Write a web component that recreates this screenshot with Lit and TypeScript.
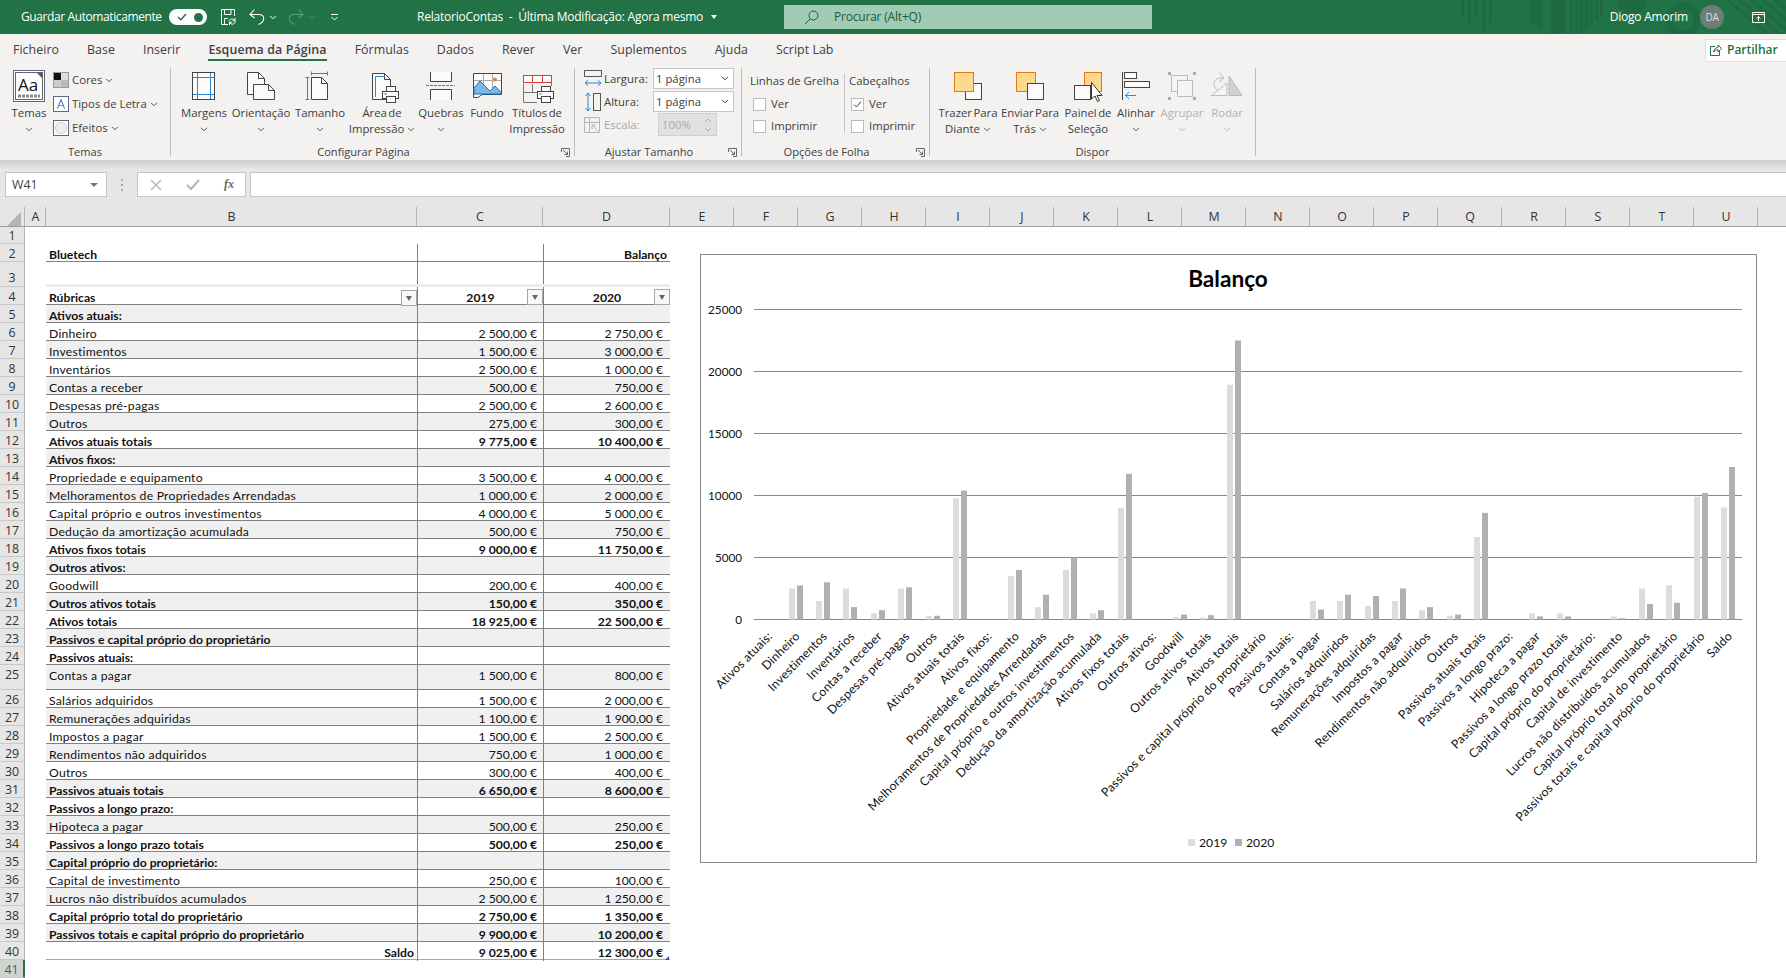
import { LitElement, css, html, svg } from "lit";
import { customElement } from "lit/decorators.js";

type Kind = "head" | "item" | "total";
interface Line {
  label: string;
  a?: number;
  b?: number;
  kind: Kind;
}

const LINES: Line[] = [
  { label: "Ativos atuais:", kind: "head" },
  { label: "Dinheiro", a: 2500, b: 2750, kind: "item" },
  { label: "Investimentos", a: 1500, b: 3000, kind: "item" },
  { label: "Inventários", a: 2500, b: 1000, kind: "item" },
  { label: "Contas a receber", a: 500, b: 750, kind: "item" },
  { label: "Despesas pré-pagas", a: 2500, b: 2600, kind: "item" },
  { label: "Outros", a: 275, b: 300, kind: "item" },
  { label: "Ativos atuais totais", a: 9775, b: 10400, kind: "total" },
  { label: "Ativos fixos:", kind: "head" },
  { label: "Propriedade e equipamento", a: 3500, b: 4000, kind: "item" },
  { label: "Melhoramentos de Propriedades Arrendadas", a: 1000, b: 2000, kind: "item" },
  { label: "Capital próprio e outros investimentos", a: 4000, b: 5000, kind: "item" },
  { label: "Dedução da amortização acumulada", a: 500, b: 750, kind: "item" },
  { label: "Ativos fixos totais", a: 9000, b: 11750, kind: "total" },
  { label: "Outros ativos:", kind: "head" },
  { label: "Goodwill", a: 200, b: 400, kind: "item" },
  { label: "Outros ativos totais", a: 150, b: 350, kind: "total" },
  { label: "Ativos totais", a: 18925, b: 22500, kind: "total" },
  { label: "Passivos e capital próprio do proprietário", kind: "head" },
  { label: "Passivos atuais:", kind: "head" },
  { label: "Contas a pagar", a: 1500, b: 800, kind: "item" },
  { label: "Salários adquiridos", a: 1500, b: 2000, kind: "item" },
  { label: "Remunerações adquiridas", a: 1100, b: 1900, kind: "item" },
  { label: "Impostos a pagar", a: 1500, b: 2500, kind: "item" },
  { label: "Rendimentos não adquiridos", a: 750, b: 1000, kind: "item" },
  { label: "Outros", a: 300, b: 400, kind: "item" },
  { label: "Passivos atuais totais", a: 6650, b: 8600, kind: "total" },
  { label: "Passivos a longo prazo:", kind: "head" },
  { label: "Hipoteca a pagar", a: 500, b: 250, kind: "item" },
  { label: "Passivos a longo prazo totais", a: 500, b: 250, kind: "total" },
  { label: "Capital próprio do proprietário:", kind: "head" },
  { label: "Capital de investimento", a: 250, b: 100, kind: "item" },
  { label: "Lucros não distribuídos acumulados", a: 2500, b: 1250, kind: "item" },
  { label: "Capital próprio total do proprietário", a: 2750, b: 1350, kind: "total" },
  { label: "Passivos totais e capital próprio do proprietário", a: 9900, b: 10200, kind: "total" },
  { label: "Saldo", a: 9025, b: 12300, kind: "total" },
];

const TABS = ["Ficheiro", "Base", "Inserir", "Esquema da Página", "Fórmulas", "Dados", "Rever", "Ver", "Suplementos", "Ajuda", "Script Lab"];
const COLS = "EFGHIJKLMNOPQRSTU".split("");

const rowHeight = (n: number) => (n === 1 ? 17 : n === 3 || n === 25 ? 25 : 18);

const money = (v: number) => {
  const [int, dec] = v.toFixed(2).split(".");
  return `${int.replace(/\B(?=(\d{3})+$)/g, "\u00a0")},${dec}\u00a0€`;
};

const chev = (c = "#555") => html`<svg class="chev" width="8" height="5" viewBox="0 0 8 5"><path d="M1 .8 4 3.8 7 .8" fill="none" stroke=${c} stroke-width="1"/></svg>`;

// icons are drawn in page coordinates, the viewBox is centred on the button
const ico = (cx: number, body: unknown) => html`<svg class="ic" width="44" height="34" viewBox="${cx - 22} 70 44 34">${body}</svg>`;

const INK = "#444";
const PAPER = "#fbfbfb";
const BLUE = "#2b88d8";

const sheetPage = (x: number, y: number, w: number, h: number, f = 6) => svg`
  <path d="M${x} ${y}H${x + w - f}L${x + w} ${y + f}V${y + h}H${x}Z" fill=${PAPER} stroke=${INK}/>
  <path d="M${x + w - f} ${y}V${y + f}H${x + w}" fill="none" stroke=${INK}/>`;

const printer = (x: number, y: number) => svg`
  <rect x=${x + 4} y=${y} width="9" height="5" fill=${PAPER} stroke=${INK}/>
  <rect x=${x} y=${y + 5} width="16" height="7" fill=${PAPER} stroke=${INK}/>
  <rect x=${x + 4} y=${y + 10} width="9" height="6" fill=${PAPER} stroke=${INK}/>
  <rect x=${x + 2} y=${y + 7} width="2" height="1" fill=${INK}/>`;

const ICONS = {
  margens: svg`<rect x="192.5" y="72.5" width="22" height="27" fill=${PAPER} stroke=${INK}/><path d="M197.5 73V99M210.5 73V99M193 77.5H214M193 94.5H214" stroke=${BLUE}/>`,
  orient: svg`${sheetPage(247.5, 72.5, 17, 22)}${sheetPage(253.5, 84.5, 21, 15)}`,
  tamanho: svg`${sheetPage(311.5, 77.5, 16, 22)}<path d="M311 73.5H328M311.5 71.5V75.5M327.5 71.5V75.5M307.5 77V100M305.5 77.5H309.5M305.5 99.5H309.5" stroke=${BLUE} fill="none"/>`,
  area: svg`${sheetPage(372.5, 73.5, 18, 26)}<path d="M375.5 97V76.5H385" fill="none" stroke=${BLUE}/>${printer(382.5, 86.5)}`,
  quebras: svg`<path d="M430.5 72V81.5H451.5V72M430.5 100V89.5H451.5V100" fill=${PAPER} stroke=${INK}/><path d="M426 85.5H455" stroke=${BLUE} stroke-dasharray="3 1"/>`,
  fundo: svg`<path d="M473.5 73.5H501.5V94.5H482L478 97.5H473.5Z" fill=${PAPER} stroke=${INK}/><path d="M474 80.5H501M483.5 74V94M492.5 74V94" stroke="#aaa"/><path d="M474 94V88L480 81 490 91 495 86 501 92.5V94Z" fill="#7db9e8" stroke="#1f6fb2"/><circle cx="495" cy="79.5" r="2" fill="#e8862e"/>`,
  titulos: svg`<path d="M523.5 83.5V102.5H537M523.5 92.5H537M532.5 84V92" fill="none" stroke="#777"/><rect x="523.5" y="75.5" width="28" height="7" fill=${PAPER} stroke="#e03a3a"/><path d="M532.5 76V82M542.5 76V82" stroke="#e03a3a"/><path d="M551.5 83V86" stroke="#777"/>${printer(537.5, 86.5)}`,
  trazer: svg`<rect x="966.5" y="83.5" width="16" height="16" fill=${PAPER} stroke=${INK}/><rect x="955.5" y="72.5" width="19" height="19" fill="#fbd98d" stroke="#e07b14"/>`,
  enviar: svg`<rect x="1017.5" y="72.5" width="19" height="19" fill="#fbd98d" stroke="#e07b14"/><rect x="1028.5" y="83.5" width="16" height="16" fill=${PAPER} stroke=${INK}/>`,
  painel: svg`<rect x="1085.5" y="72.5" width="17" height="19" fill="#fbd98d" stroke="#e07b14"/><rect x="1075.5" y="85.5" width="16" height="14" fill=${PAPER} stroke=${INK}/><path d="M1092.5 82.5V99L1096 96 1098.5 101.5 1100.5 100.5 1098 95.5H1103Z" fill="#fff" stroke="#333"/>`,
  alinhar: svg`<path d="M1123.5 72V100" stroke=${INK}/><rect x="1125.5" y="72.5" width="12" height="6" fill=${PAPER} stroke=${INK}/><rect x="1125.5" y="81.5" width="25" height="6" fill=${PAPER} stroke=${INK}/><path d="M1137 95.5H1126M1130 92 1126.5 95.5 1130 99" fill="none" stroke=${BLUE}/>`,
  agrupar: svg`<g fill="#f4f4f4" stroke="#bbb"><rect x="1172.5" y="75.5" width="16" height="16"/><rect x="1178.5" y="80.5" width="15" height="16"/></g><g fill="#aaa"><rect x="1169" y="72" width="3" height="3"/><rect x="1194" y="72" width="3" height="3"/><rect x="1169" y="97" width="3" height="3"/><rect x="1194" y="97" width="3" height="3"/></g>`,
  rodar: svg`<path d="M1212.5 95.5H1228V83Z" fill="#f4f4f4" stroke="#bbb"/><path d="M1230 95.5H1243L1230 76Z" fill="#d0d0d0" stroke="#bbb"/><path d="M1218 90C1212 85 1215 77 1224 78M1220 72.5 1225 78 1220 82" fill="none" stroke="#bbb"/>`,
};

const titleIcons = {
  save: html`<svg width="18" height="18" viewBox="0 0 18 18" fill="none" stroke="#fff"><path d="M9 16.5H2.5V1.5H15.5V8M5.5 2V6.5H12V2M5.5 16V10.5H9"/><path d="M10 13.5C10.5 10.5 14.5 10 16 12.5M16 10V12.8H13.4M16.5 13.5C16 16.5 12 17 10.5 14.5M10.5 17V14.2H13"/></svg>`,
  undo: html`<svg width="16" height="18" viewBox="0 0 16 18" fill="none" stroke="#fff" stroke-width="1.1"><path d="M1 6.5H10.5C16.5 7 16 14 9.5 16.5M5.5 1.5 1 6.5 5.5 10"/></svg>`,
  redo: html`<svg width="16" height="18" viewBox="0 0 16 18" fill="none" stroke="#5d9c7c" stroke-width="1.1"><path d="M15 6.5H5.5C-.5 7 0 14 6.5 16.5M10.5 1.5 15 6.5 10.5 10"/></svg>`,
  custom: html`<svg width="9" height="9" viewBox="0 0 9 9" fill="none" stroke="#fff"><path d="M1 1.5H8M1.5 4 4.5 7 7.5 4"/></svg>`,
};

@customElement("app-root")
export class AppRoot extends LitElement {
  static styles = css`
    :host {
      display: block;
      width: 1786px;
      height: 978px;
      overflow: hidden;
      background: #fff;
      color: #404040;
      font: 12px/16px "Open Sans", sans-serif;
    }
    svg {
      display: block;
      flex: none;
    }

    .titlebar {
      position: relative;
      display: flex;
      align-items: center;
      height: 34px;
      background: #217346;
      color: #fff;
      overflow: hidden;
    }
    .deco {
      position: absolute;
      left: 1450px;
      top: 0;
    }
    .qa {
      display: flex;
      align-items: center;
      width: 417px;
      flex: none;
    }
    .autosave {
      width: 169px;
      padding-left: 21px;
      box-sizing: border-box;
      white-space: nowrap;
      letter-spacing: -0.4px;
    }
    .toggle {
      display: flex;
      align-items: center;
      justify-content: space-between;
      width: 38px;
      height: 16px;
      padding: 0 4px 0 8px;
      box-sizing: border-box;
      border-radius: 8px;
      background: #fff;
      margin-right: 12px;
    }
    .toggle i {
      width: 9px;
      height: 9px;
      border-radius: 50%;
      background: #217346;
    }
    .qa .spacer {
      width: 12px;
    }
    .qa .gap4 {
      margin: 0 4px;
    }
    .qa .redo {
      margin-left: 7px;
    }
    .qa .custom {
      margin-left: 10px;
    }
    .doc {
      width: 367px;
      flex: none;
      white-space: pre;
      display: flex;
      align-items: center;
      letter-spacing: -0.22px;
    }
    .doc b {
      width: 0;
      height: 0;
      margin-left: 8px;
      border: 3.5px solid transparent;
      border-top: 4px solid #fff;
      border-bottom: 0;
    }
    .search {
      display: flex;
      align-items: center;
      width: 368px;
      height: 24px;
      flex: none;
      background: #a0ccb4;
      color: #1c5a38;
      padding-left: 20px;
      box-sizing: border-box;
      gap: 15px;
      letter-spacing: -0.2px;
    }
    .user {
      position: relative;
      margin-left: auto;
      display: flex;
      align-items: center;
      letter-spacing: -0.2px;
    }
    .avatar {
      width: 24px;
      height: 24px;
      border-radius: 50%;
      margin: 0 28px 0 12px;
      background: #6f7d78;
      color: #d9dedc;
      font-size: 10px;
      text-align: center;
      line-height: 24px;
    }
    .user svg {
      margin-right: 21px;
    }

    .tabs {
      display: flex;
      align-items: center;
      height: 32px;
      background: #f3f2f1;
      padding-top: 0;
    }
    .tab {
      position: relative;
      padding: 0 14px;
      line-height: 32px;
      font-size: 12.4px;
      white-space: nowrap;
      letter-spacing: 0.04px;
    }
    .tab:first-child {
      margin-left: -1px;
    }
    .tab.on {
      font-weight: 600;
      letter-spacing: 0.12px;
    }
    .tab.on::after {
      content: "";
      position: absolute;
      left: 14px;
      right: 14px;
      bottom: 5px;
      height: 2px;
      background: #217346;
    }
    .share {
      display: flex;
      align-items: center;
      gap: 5px;
      margin-left: auto;
      width: 81px;
      height: 23px;
      box-sizing: border-box;
      padding-left: 4px;
      background: #fff;
      border: 1px solid #e1dfdd;
      border-right: 0;
      border-radius: 2px 0 0 2px;
      color: #217346;
      font-weight: 600;
      font-size: 12px;
    }

    .ribbon {
      display: flex;
      height: 94px;
      background: #f3f2f1;
    }
    .group {
      display: flex;
      flex-direction: column;
      flex: none;
    }
    .body {
      display: flex;
      height: 78px;
    }
    .caption {
      display: flex;
      align-items: center;
      height: 16px;
      font-size: 11.1px;
    }
    .caption span {
      flex: 1;
      text-align: center;
    }
    .launch {
      width: 18px;
      display: flex;
      justify-content: center;
    }
    .sep {
      width: 1px;
      height: 88px;
      margin-top: 2px;
      flex: none;
      background: #bdbdbd;
    }
    .big {
      display: flex;
      flex-direction: column;
      align-items: center;
      padding-top: 4px;
      flex: none;
      font-size: 11.35px;
      word-spacing: -1.5px;
      white-space: nowrap;
    }
    .big .ic {
      margin-bottom: 1px;
    }
    .big .ln {
      display: flex;
      align-items: center;
      justify-content: center;
      gap: 3px;
      height: 16px;
    }
    .big.off {
      color: #b1b1b1;
    }
    .small {
      padding-top: 2px;
      font-size: 11.35px;
    }
    .small div {
      display: flex;
      align-items: center;
      gap: 3px;
      height: 24px;
      white-space: nowrap;
    }
    .fit {
      display: grid;
      grid-template-columns: 20px 49px 81px;
      grid-auto-rows: 21px;
      row-gap: 2px;
      align-items: center;
      padding: 2px 0 0 9px;
      font-size: 11.35px;
    }
    .combo {
      display: flex;
      align-items: center;
      justify-content: space-between;
      height: 21px;
      box-sizing: border-box;
      padding: 0 4px 0 2px;
      background: #fff;
      border: 1px solid #c8c6c4;
    }
    .combo.off {
      width: 59px;
      height: 23px;
      margin-left: 5px;
      background: #e1e1e1;
      color: #aaa;
      padding-left: 3px;
      border-color: #cfcfcf;
    }
    .dim {
      color: #a6a6a6;
    }
    .opts {
      display: grid;
      grid-template-rows: 24px 22px 22px;
      align-items: center;
      padding-top: 3px;
      font-size: 11.35px;
      white-space: nowrap;
      align-content: start;
    }
    .opts.one {
      width: 94px;
      padding-left: 8px;
    }
    .opts.two {
      width: 80px;
      padding-left: 5px;
      position: relative;
    }
    .opts.two::before {
      content: "";
      position: absolute;
      left: 0;
      top: 8px;
      height: 59px;
      width: 1px;
      background: #c8c6c4;
    }
    .check {
      display: flex;
      align-items: center;
      gap: 5px;
      padding-left: 3px;
    }
    .opts.two .check {
      padding-left: 2px;
    }
    .box {
      width: 13px;
      height: 13px;
      box-sizing: border-box;
      background: #fff;
      border: 1px solid #bbb;
    }

    .fx {
      display: flex;
      align-items: flex-start;
      height: 47px;
      box-sizing: border-box;
      padding-top: 12px;
      background: linear-gradient(#cdcdcd, #e6e6e6 9px);
    }
    .name,
    .btns,
    .input {
      height: 25px;
      box-sizing: border-box;
      background: #fff;
      border: 1px solid #c6c6c6;
    }
    .name {
      display: flex;
      align-items: center;
      justify-content: space-between;
      margin-left: 5px;
      width: 102px;
      padding: 0 8px 0 6px;
      font-size: 12.4px;
    }
    .name b {
      width: 0;
      height: 0;
      border: 4px solid transparent;
      border-top: 4px solid #777;
      border-bottom: 0;
    }
    .dots {
      width: 30px;
      display: flex;
      flex-direction: column;
      align-items: center;
      gap: 3px;
      padding-top: 7px;
    }
    .dots i {
      width: 2px;
      height: 2px;
      background: #aaa;
    }
    .btns {
      display: flex;
      align-items: center;
      width: 109px;
      padding-left: 12px;
      gap: 24px;
    }
    .fxlabel {
      font: italic bold 12px "Liberation Serif", serif;
      color: #666;
    }
    .input {
      flex: 1;
      margin-left: 4px;
      border-right: 0;
    }

    .heads {
      display: flex;
      height: 20px;
      box-sizing: border-box;
      background: #e6e6e6;
      border-bottom: 1px solid #9e9e9e;
      color: #333;
      font-size: 12.4px;
      line-height: 19px;
      text-align: center;
    }
    .corner {
      width: 22px;
      padding-right: 3px;
      border-right: 0;
      display: flex;
      justify-content: flex-end;
      align-items: flex-end;
    }
    .colhead {
      flex: none;
      box-sizing: border-box;
      border-right: 1px solid #b4b4b4;
      padding-left: 1px;
    }

    .sheet {
      position: relative;
      display: flex;
      height: 751px;
      overflow: hidden;
    }
    .rownums {
      width: 25px;
      flex: none;
      background: #e6e6e6;
      border-right: 1px solid #b4b4b4;
      box-sizing: border-box;
      color: #333;
      font-size: 12.4px;
      text-align: center;
    }
    .rownums div {
      display: flex;
      align-items: center;
      justify-content: center;
      box-sizing: border-box;
      padding-top: 2px;
      border-bottom: 1px solid #c8c8c8;
    }
    .rownums .low {
      align-items: flex-end;
      padding-top: 0;
    }
    .rownums .high {
      align-items: flex-start;
      padding-top: 2px;
    }
    .rownums .sel {
      background: #d2d2d2;
      color: #217346;
      border-right: 2px solid #217346;
      margin-right: -1px;
    }
    .rows {
      width: 624px;
      margin-left: 21px;
      flex: none;
      font: 12.2px/16px Lato, sans-serif;
      color: #111;
    }
    .row {
      display: grid;
      grid-template-columns: 371px 126px 127px;
      box-sizing: border-box;
    }
    .row.line {
      border-bottom: 1px solid #808080;
    }
    .row.last {
      border-bottom-color: #a6a6a6;
    }
    .row.band {
      background: #f0f0f0;
    }
    .row.gutter {
      border-bottom: 3px solid #ececec;
    }
    .row.bold {
      font-weight: 700;
    }
    .row.plain .cell:first-child {
      letter-spacing: 0.23px;
    }
    .cell {
      display: flex;
      align-items: center;
      min-width: 0;
      padding: 3px 3px 0;
      white-space: nowrap;
      box-sizing: border-box;
    }
    .row.high .cell {
      align-items: flex-start;
      padding-top: 3px;
    }
    .cell.v {
      border-left: 1px solid #808080;
      justify-content: flex-end;
      padding-right: 6px;
    }
    .cell.v.d {
      padding-right: 7px;
    }
    .cell.end {
      justify-content: flex-end;
    }
    .cell.mid {
      justify-content: center;
      position: relative;
      padding-left: 0;
      padding-right: 0;
    }
    .cell.lab {
      justify-content: space-between;
      padding-right: 0;
    }
    .filter {
      display: flex;
      align-items: center;
      justify-content: center;
      width: 16px;
      height: 16px;
      box-sizing: border-box;
      background: #f8f8f8;
      border: 1px solid #a6a6a6;
    }
    .filter i {
      border: 3.5px solid transparent;
      border-top: 5px solid #666;
      border-bottom: 0;
    }
    .cell.mid .filter {
      position: absolute;
      right: 0;
      top: 2px;
    }
    .handle {
      position: absolute;
      left: 665px;
      top: 729px;
      width: 0;
      height: 0;
      border-left: 4px solid transparent;
      border-bottom: 4px solid #2f4fb5;
    }
    .chart {
      position: absolute;
      left: 700px;
      top: 27px;
    }
    .chart text {
      font-family: Lato, sans-serif;
      fill: #111;
    }
    .chart text.cat {
      letter-spacing: 0.22px;
    }
  `;

  private big(cx: number, w: number, icon: unknown, l1: string, l2 = "", off = false) {
    const c = off ? "#bbb" : "#555";
    return html`<div class="big ${off ? "off" : ""}" style="width:${w}px">
      ${ico(cx, icon)}
      <div class="ln">${l1}</div>
      <div class="ln">${l2}${chev(c)}</div>
    </div>`;
  }

  private plain(cx: number, w: number, icon: unknown, l1: string, l2: string) {
    return html`<div class="big" style="width:${w}px">${ico(cx, icon)}<div class="ln">${l1}</div><div class="ln">${l2}</div></div>`;
  }

  private launcher() {
    return html`<div class="launch"><svg width="9" height="9" viewBox="0 0 9 9" fill="none" stroke="#666"><path d="M.5 4V.5H8.5V8.5H5M2 2 6.5 6.5M6.5 3.5V6.5H3.5"/></svg></div>`;
  }

  private renderTitle() {
    return html`<div class="titlebar">
      <svg class="deco" width="336" height="34" viewBox="0 0 336 34" fill="#1e6a41">
        <path d="M11 0h3v16h-3zM18 0h3v24h-3zM25 0h3v18h-3zM32 0h3v32h-3zM39 0h3v22h-3zM79 0h13v28l-13-6zM101 0h14v34h-14zM120 0h3v34h-3zM125 0h3v34h-3zM130 0h3v34h-3zM135 0h3v28h-3zM140 0h3v24h-3zM145 0h3v20h-3zM150 0h3v16h-3z"/>
        <circle cx="182" cy="0" r="14"/>
        <circle cx="233" cy="20" r="14" fill="none" stroke="#1e6a41" stroke-width="7"/>
        <path d="M275 0h5l40 34h-5zM287 0h5l40 34h-5zM299 0h5l32 27v5zM311 0h5l20 17v5zM323 0h5l8 7v5z"/>
      </svg>
      <div class="qa">
        <div class="autosave">Guardar Automaticamente</div>
        <div class="toggle">
          <svg width="10" height="8" viewBox="0 0 10 8" fill="none" stroke="#217346" stroke-width="1.4"><path d="M1 4 3.8 6.8 9 1"/></svg>
          <i></i>
        </div>
        ${titleIcons.save}
        <span class="spacer"></span>
        ${titleIcons.undo}
        <span class="gap4">${chev("#fff")}</span>
        <span class="redo">${titleIcons.redo}</span>
        <span class="gap4">${chev("#5d9c7c")}</span>
        <span class="custom">${titleIcons.custom}</span>
      </div>
      <div class="doc">RelatorioContas  -  Última Modificação: Agora mesmo<b></b></div>
      <div class="search">
        <svg width="15" height="15" viewBox="0 0 15 15" fill="none" stroke="#1c5a38"><circle cx="9.5" cy="5.5" r="4.5"/><path d="M6 9 1 14"/></svg>
        Procurar (Alt+Q)
      </div>
      <div class="user">
        Diogo Amorim
        <div class="avatar">DA</div>
        <svg width="13" height="11" viewBox="0 0 13 11" fill="none" stroke="#fff"><path d="M.5.5H12.5V10.5H.5ZM.5 2.5H12.5M6.5 9V4.5M4.5 6.5 6.5 4.5 8.5 6.5"/></svg>
      </div>
    </div>`;
  }

  private renderTabs() {
    return html`<div class="tabs">
      ${TABS.map((t) => html`<div class="tab ${t === "Esquema da Página" ? "on" : ""}">${t}</div>`)}
      <div class="share">
        <svg width="12" height="12" viewBox="0 0 12 12" fill="none" stroke="#217346"><path d="M5 2.5H.5V11.5H9.5V7M3.5 8C4 5 6 3.5 8 3.5V1L11.5 4.5 8 8V5.7C6.5 5.7 5 6.3 3.5 8Z"/></svg>
        Partilhar
      </div>
    </div>`;
  }

  private renderRibbon() {
    return html`<div class="ribbon">
      <div class="group" style="width:170px">
        <div class="body" style="padding-left:5px">
          <div class="big" style="width:48px;padding-top:4px">
            <svg class="ic" width="32" height="34" viewBox="0 0 32 34">
              <rect x=".5" y=".5" width="31" height="31" fill="#fff" stroke="#5a6a85"/>
              <rect x="2.5" y="2.5" width="27" height="27" fill="#fff" stroke="#666"/>
              <path d="M24 3H29V8Z" fill="#555"/>
              <text x="5" y="21" font-family="Open Sans" font-size="17" fill="#111">Aa</text>
              <path d="M5 26H27" stroke="#888" stroke-width="3" stroke-dasharray="3 1"/>
            </svg>
            <div class="ln">Temas</div>
            <div class="ln">${chev()}</div>
          </div>
          <div class="small">
            <div>
              <svg width="16" height="16" viewBox="0 0 16 16"><rect x=".5" y=".5" width="15" height="15" fill="#ddd" stroke="#999"/><rect x="1" y="1" width="7" height="7" fill="#111"/><rect x="8" y="8" width="7" height="7" fill="#bbb"/><rect x="1" y="8" width="7" height="7" fill="#ccc"/></svg>
              Cores ${chev()}
            </div>
            <div>
              <svg width="16" height="16" viewBox="0 0 16 16"><rect x=".5" y=".5" width="15" height="15" fill="#fff" stroke="#5a6a85"/><path d="M4.5 12.5 8 3.5 11.5 12.5" fill="none" stroke="#2b6cb5"/><path d="M5.5 9.5H10.5" stroke="#d9822b"/></svg>
              Tipos de Letra ${chev()}
            </div>
            <div>
              <svg width="16" height="16" viewBox="0 0 16 16"><rect x=".5" y=".5" width="15" height="15" fill="#fff" stroke="#5a6a85"/><circle cx="8" cy="8" r="5.5" fill="#eee" stroke="#ccc"/></svg>
              Efeitos ${chev()}
            </div>
          </div>
        </div>
        <div class="caption"><span>Temas</span></div>
      </div>
      <div class="sep"></div>

      <div class="group" style="width:403px">
        <div class="body" style="padding-left:5px">
          ${this.big(204, 56, ICONS.margens, "Margens")}
          ${this.big(261, 58, ICONS.orient, "Orientação")}
          ${this.big(320, 60, ICONS.tamanho, "Tamanho")}
          ${this.big(382, 64, ICONS.area, "Área de", "Impressão")}
          ${this.big(441, 54, ICONS.quebras, "Quebras")}
          ${this.plain(487, 38, ICONS.fundo, "Fundo", "")}
          ${this.plain(537, 62, ICONS.titulos, "Títulos de", "Impressão")}
        </div>
        <div class="caption"><span>Configurar Página</span>${this.launcher()}</div>
      </div>
      <div class="sep"></div>

      <div class="group" style="width:166px">
        <div class="body">
          <div class="fit">
            <svg width="18" height="20" viewBox="0 0 18 20" fill="none"><path d="M.5 1.5H17.5V7.5H.5Z" stroke="#555"/><path d="M1 14H17M1 14 4 11.5M1 14 4 16.5M17 14 14 11.5M17 14 14 16.5" stroke=${BLUE}/></svg>
            <span>Largura:</span>
            <div class="combo">1 página ${chev("#333")}</div>
            <svg width="18" height="20" viewBox="0 0 18 20" fill="none"><rect x="9.5" y="1.5" width="7" height="17" stroke="#555"/><path d="M4 1V19M4 1 1.5 4M4 1 6.5 4M4 19 1.5 16M4 19 6.5 16" stroke=${BLUE}/></svg>
            <span>Altura:</span>
            <div class="combo">1 página ${chev("#333")}</div>
            <svg width="16" height="16" viewBox="0 0 16 16" fill="none" stroke="#b5b5b5"><path d="M.5.5H15.5V15.5H.5ZM5.5 1V15M1 5.5H15M14 14 8 8M8 12V8H12"/></svg>
            <span class="dim">Escala:</span>
            <div class="combo off">100% <svg width="8" height="14" viewBox="0 0 8 14" fill="none" stroke="#aaa"><path d="M1 4 4 1 7 4M1 10 4 13 7 10"/></svg></div>
          </div>
        </div>
        <div class="caption"><span>Ajustar Tamanho</span>${this.launcher()}</div>
      </div>
      <div class="sep"></div>

      <div class="group" style="width:187px">
        <div class="body">
          <div class="opts one" style="width:94px">
            <div>Linhas de Grelha</div>
            <div class="check"><div class="box"></div>Ver</div>
            <div class="check"><div class="box"></div>Imprimir</div>
          </div>
          <div class="opts two">
            <div>Cabeçalhos</div>
            <div class="check">
              <div class="box"><svg width="11" height="11" viewBox="0 0 11 11" fill="none" stroke="#444"><path d="M2 5.5 4.5 8 9 2.5"/></svg></div>
              Ver
            </div>
            <div class="check"><div class="box"></div>Imprimir</div>
          </div>
        </div>
        <div class="caption"><span>Opções de Folha</span>${this.launcher()}</div>
      </div>
      <div class="sep"></div>

      <div class="group" style="width:325px">
        <div class="body" style="padding-left:7px">
          ${this.big(969, 62, ICONS.trazer, "Trazer Para", "Diante")}
          ${this.big(1031, 62, ICONS.enviar, "Enviar Para", "Trás")}
          ${this.plain(1089, 54, ICONS.painel, "Painel de", "Seleção")}
          ${this.big(1137, 42, ICONS.alinhar, "Alinhar")}
          ${this.big(1183, 50, ICONS.agrupar, "Agrupar", "", true)}
          ${this.big(1228, 40, ICONS.rodar, "Rodar", "", true)}
        </div>
        <div class="caption"><span>Dispor</span></div>
      </div>
      <div class="sep"></div>
    </div>`;
  }

  private renderFormula() {
    return html`<div class="fx">
      <div class="name">W41<b></b></div>
      <div class="dots"><i></i><i></i><i></i></div>
      <div class="btns">
        <svg width="12" height="12" viewBox="0 0 12 12" stroke="#b5b5b5" stroke-width="1.4"><path d="M1 1 11 11M11 1 1 11"/></svg>
        <svg width="14" height="12" viewBox="0 0 14 12" fill="none" stroke="#b5b5b5" stroke-width="2"><path d="M1 6 5 10 13 1"/></svg>
        <span class="fxlabel">fx</span>
      </div>
      <div class="input"></div>
    </div>`;
  }

  private renderHeads() {
    return html`<div class="heads">
      <div class="colhead corner" style="width:25px">
        <svg width="14" height="14" viewBox="0 0 14 14"><path d="M14 0V14H0Z" fill="#b4b4b4"/></svg>
      </div>
      <div class="colhead" style="width:21px">A</div>
      <div class="colhead" style="width:371px">B</div>
      <div class="colhead" style="width:126px">C</div>
      <div class="colhead" style="width:127px">D</div>
      ${COLS.map((c) => html`<div class="colhead" style="width:64px">${c}</div>`)}
    </div>`;
  }

  private renderTable() {
    const nums = Array.from({ length: 41 }, (_, i) => i + 1);
    const numClass = (n: number) => (n === 41 ? "sel" : n === 3 ? "low" : n === 25 ? "high" : "");
    return html`<div class="rownums">
        ${nums.map((n) => html`<div class=${numClass(n)} style="height:${rowHeight(n)}px">${n}</div>`)}
      </div>
      <div class="rows">
        <div style="height:${rowHeight(1)}px"></div>
        <div class="row line bold" style="height:18px">
          <div class="cell">Bluetech</div>
          <div class="cell v"></div>
          <div class="cell v" style="padding-right:3px">Balanço</div>
        </div>
        <div class="row gutter" style="height:25px">
          <div class="cell"></div>
          <div class="cell v"></div>
          <div class="cell v"></div>
        </div>
        <div class="row line bold" style="height:18px">
          <div class="cell lab">Rúbricas<span class="filter"><i></i></span></div>
          <div class="cell v mid">2019<span class="filter"><i></i></span></div>
          <div class="cell v mid">2020<span class="filter"><i></i></span></div>
        </div>
        ${LINES.map((l, i) => {
          const n = i + 5;
          const cls = ["row", "line"];
          if (n % 2) cls.push("band");
          cls.push(l.kind === "item" ? "plain" : "bold");
          if (n === 25) cls.push("high");
          if (n === 40) cls.push("last");
          return html`<div class=${cls.join(" ")} style="height:${rowHeight(n)}px">
            <div class="cell ${n === 40 ? "end" : ""}">${l.label}</div>
            <div class="cell v">${l.a === undefined ? "" : money(l.a)}</div>
            <div class="cell v d">${l.b === undefined ? "" : money(l.b)}</div>
          </div>`;
        })}
      </div>
      <div class="handle"></div>`;
  }

  private renderChart() {
    const left = 754.4;
    const step = 987.4 / LINES.length;
    const base = 619.5;
    const h = (v: number) => (v * 62) / 5000;
    return html`<svg class="chart" width="1057" height="609" viewBox="700 254 1057 609">
      <rect x="700.5" y="254.5" width="1056" height="608" fill="#fff" stroke="#8a8a8a"/>
      <text x="1228" y="287" text-anchor="middle" font-size="22.6" font-weight="700" style="fill:#000">Balanço</text>
      ${[0, 1, 2, 3, 4, 5].map((i) => {
        const y = base - i * 62;
        return svg`<path d="M754 ${y}H1742" stroke="#868686"/>
          <text x="742" y=${y + 4.5} text-anchor="end" font-size="11.7">${i * 5000}</text>`;
      })}
      ${LINES.map((l, i) => {
        const c = left + step * (i + 0.5);
        const x = Math.round(c);
        return svg`
          ${l.a ? svg`<rect x=${x - 7} y=${base - h(l.a)} width="6" height=${h(l.a)} fill="#dcdcdc"/>` : ""}
          ${l.b ? svg`<rect x=${x + 1} y=${base - h(l.b)} width="6" height=${h(l.b)} fill="#b0b0b0"/>` : ""}
          <text class="cat" x=${c + 5} y="637" text-anchor="end" font-size="12.2" transform="rotate(-45 ${c + 5} 637)">${l.label}</text>`;
      })}
      <rect x="1188" y="839" width="7" height="7" fill="#dcdcdc"/>
      <text x="1199" y="847" font-size="12.2">2019</text>
      <rect x="1235" y="839" width="7" height="7" fill="#b0b0b0"/>
      <text x="1246" y="847" font-size="12.2">2020</text>
    </svg>`;
  }

  render() {
    return html`
      ${this.renderTitle()} ${this.renderTabs()} ${this.renderRibbon()} ${this.renderFormula()} ${this.renderHeads()}
      <div class="sheet">${this.renderTable()} ${this.renderChart()}</div>
    `;
  }
}
